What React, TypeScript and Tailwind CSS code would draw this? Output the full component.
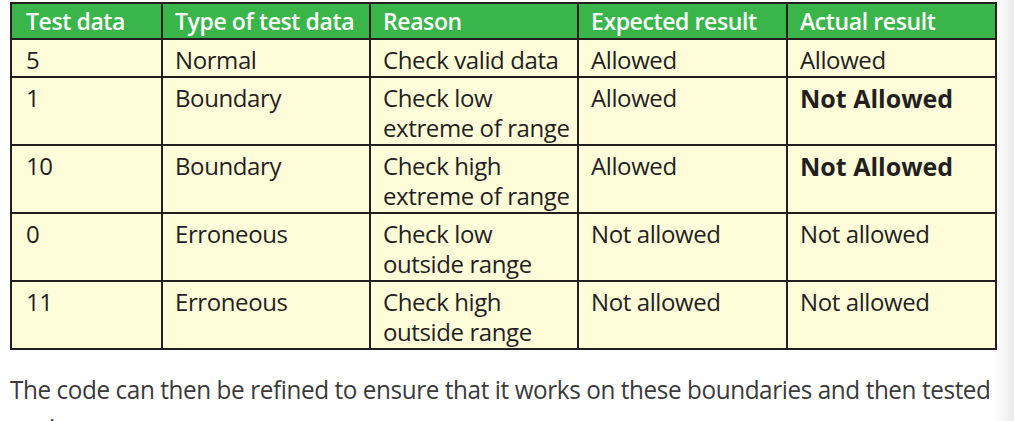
const rows = [
  { data: '5', type: 'Normal', reason: ['Check valid data'], expected: 'Allowed', actual: 'Allowed', bold: false },
  { data: '1', type: 'Boundary', reason: ['Check low', 'extreme of range'], expected: 'Allowed', actual: 'Not Allowed', bold: true },
  { data: '10', type: 'Boundary', reason: ['Check high', 'extreme of range'], expected: 'Allowed', actual: 'Not Allowed', bold: true },
  { data: '0', type: 'Erroneous', reason: ['Check low', 'outside range'], expected: 'Not allowed', actual: 'Not allowed', bold: false },
  { data: '11', type: 'Erroneous', reason: ['Check high', 'outside range'], expected: 'Not allowed', actual: 'Not allowed', bold: false },
]

const headers = ['Test data', 'Type of test data', 'Reason', 'Expected result', 'Actual result']

const cell = 'border-2 border-[#231f20] pr-[10px] pt-[5px] pb-[1px]'

export default function App() {
  return (
    <div
      className="w-[1014px] h-[421px] overflow-hidden bg-linear-to-r from-white from-[98%] to-[#ececec] text-[#231f20]"
      style={{ fontFamily: '"Open Sans", "Noto Sans", sans-serif' }}
    >
      <div className="pl-[10px] pt-[2px] w-[997px]">
        <table className="w-[985px] table-fixed border-collapse border-2 border-[#231f20] text-[24px] leading-[30px] tracking-[-0.4px]">
          <colgroup>
            <col className="w-[151px]" />
            <col className="w-[208px]" />
            <col className="w-[208px]" />
            <col className="w-[209px]" />
            <col className="w-[209px]" />
          </colgroup>
          <thead>
            <tr className="bg-[#39b54a] text-white text-[23px] tracking-[-0.4px]">
              {headers.map((h, i) => (
                <th
                  key={h}
                  className={`border-2 border-[#231f20] pr-[8px] py-[2px] text-left font-semibold whitespace-nowrap ${
                    i === 0 ? 'pl-[14px]' : 'pl-[12px]'
                  }`}
                >
                  {h}
                </th>
              ))}
            </tr>
          </thead>
          <tbody className="bg-[#fffcd9]">
            {rows.map((r) => (
              <tr key={r.data} className="align-top">
                <td className={`${cell} pl-[14px]`}>{r.data}</td>
                <td className={`${cell} pl-[12px]`}>{r.type}</td>
                <td className={`${cell} pl-[12px]`}>
                  {r.reason.map((line) => (
                    <div key={line} className="whitespace-nowrap">{line}</div>
                  ))}
                </td>
                <td className={`${cell} pl-[12px]`}>{r.expected}</td>
                <td className={`${cell} pl-[12px] ${r.bold ? 'font-bold text-[25px] tracking-normal' : ''}`}>
                  {r.actual}
                </td>
              </tr>
            ))}
          </tbody>
        </table>
        <p className="mt-[20px] origin-left scale-x-[0.935] text-[26px] leading-[38px] text-[#3a3a3a] tracking-[-0.45px] whitespace-nowrap">
          The code can then be refined to ensure that it works on these boundaries and then tested
          <br />
          again.
        </p>
      </div>
    </div>
  )
}
